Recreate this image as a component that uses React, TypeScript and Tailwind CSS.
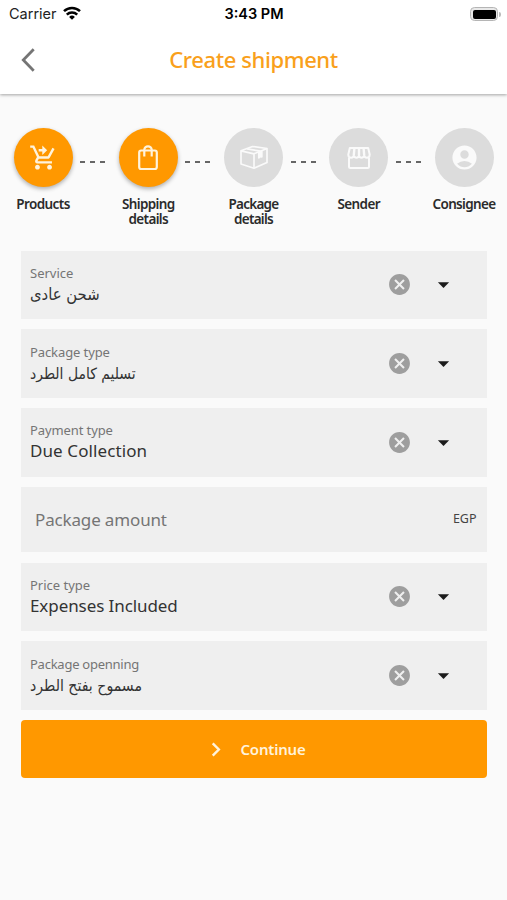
import { Fragment, type ReactNode } from 'react';
import { MdAccountCircle, MdArrowDropDown, MdCancel } from 'react-icons/md';
import clsx from 'clsx';

type Step = { label: string; labelClass: string; icon: ReactNode; active?: boolean };

type Field = {
  label: string;
  labelClass: string;
  value: string;
  valueClass: string;
  rtl?: boolean;
};

function CartIcon() {
  return (
    <svg viewBox="0 0 24 24" fill="currentColor" className="size-[29px]">
      <path d="M11 9V7H8V5h3V2l4 3.900L11 10zM7 18c-1.100 0-1.990.9-1.990 2S5.900 22 7 22s2-.9 2-2-.9-2-2-2zm10 0c-1.100 0-1.990.9-1.990 2s.89 2 1.990 2 2-.9 2-2-.9-2-2-2zm-8.900-5h7.450c.75 0 1.410-.41 1.750-1.030L21.160 4.960 19.420 4l-3.870 7H8.530L4.270 2H1v2h2l3.600 7.590-1.350 2.440C4.520 15.370 5.480 17 7 17h12v-2H7z" />
    </svg>
  );
}

function BagIcon() {
  return (
    <svg viewBox="0 0 28 28" fill="none" stroke="currentColor" strokeWidth="2.200" className="size-7">
      <rect x="5.200" y="6.500" width="17.600" height="18.500" rx="2" />
      <path d="M10.300 12.500V6a3.700 3.700 0 0 1 7.400 0v6.500" />
    </svg>
  );
}

function BoxIcon() {
  return (
    <svg viewBox="0 0 30 30" fill="none" stroke="currentColor" strokeWidth="1.700" strokeLinejoin="round" className="size-[30px]">
      <path d="M2 7.800 13.500 3.500 28 5.500v14l-13 5.700-13-4.200z" />
      <path d="M2 7.800l13 3 13-5.300M15 10.800v14.400M8 5.800l13.500 2.400" />
      <path d="M19.800 9.500v5.300l1.600-1.300 1.400.3V8z" fill="currentColor" />
    </svg>
  );
}

function StoreIcon() {
  return (
    <svg viewBox="0 0 24 24" fill="none" stroke="currentColor" strokeWidth="2" strokeLinejoin="round" className="size-6">
      <path d="M2 12v8.500a1.500 1.500 0 0 0 1.500 1.500h17a1.500 1.500 0 0 0 1.500-1.500V12" />
      <path d="M2.800 2h18.400l1.500 6.500c0 2-1.200 3.200-2.800 3.200s-2.500-1-2.700-2.200c-.4 1.300-1.400 2.200-2.700 2.200S12.200 10.700 12 9.500c-.2 1.200-1.200 2.200-2.500 2.200S7.200 10.800 6.800 9.500C6.600 10.700 5.700 11.700 4.100 11.700S1.300 10.500 1.300 8.500z" />
      <path d="M7.400 2.500 6.800 9M12 2.500V9M16.600 2.500l.6 6.500" strokeWidth="2.400" />
    </svg>
  );
}

const steps: Step[] = [
  { label: 'Products', labelClass: 'tracking-[-0.57px]', icon: <CartIcon />, active: true },
  { label: 'Shipping details', labelClass: 'tracking-[-0.65px]', icon: <BagIcon />, active: true },
  { label: 'Package details', labelClass: 'tracking-[-0.74px]', icon: <BoxIcon /> },
  { label: 'Sender', labelClass: 'tracking-[-0.6px]', icon: <StoreIcon /> },
  { label: 'Consignee', labelClass: 'tracking-[-0.65px]', icon: <MdAccountCircle className="size-[29px]" /> },
];

const fields: Field[] = [
  { label: 'Service', labelClass: 'tracking-[0px]', value: 'شحن عادى', valueClass: 'text-[16.500px]', rtl: true },
  { label: 'Package type', labelClass: 'tracking-[-0.1px]', value: 'تسليم كامل الطرد', valueClass: 'text-[15.500px]', rtl: true },
  { label: 'Payment type', labelClass: 'tracking-[-0.1px]', value: 'Due Collection', valueClass: 'tracking-[0.1px]' },
];

const moreFields: Field[] = [
  { label: 'Price type', labelClass: 'tracking-[0px]', value: 'Expenses Included', valueClass: 'tracking-[-0.08px]' },
  { label: 'Package openning', labelClass: 'tracking-[-0.25px]', value: 'مسموح بفتح الطرد', valueClass: 'text-[15.700px]', rtl: true },
];

function StatusBar() {
  return (
    <div className="grid h-7 grid-cols-3 items-center pl-[9px] pr-[6px] font-['Inter',sans-serif] text-[14.500px] text-[#222]">
      <div className="flex items-center gap-[6px]">
        <span>Carrier</span>
        <svg viewBox="0 0 18 14" className="mb-[2px] h-[14px] w-[18px] text-black">
          <path d="M1 5.200a11.500 11.500 0 0 1 16 0M3.800 8.600a7.500 7.500 0 0 1 10.400 0" fill="none" stroke="currentColor" strokeWidth="2.500" />
          <path d="M9 13.800 6.100 10.900a4.300 4.300 0 0 1 5.800 0z" fill="currentColor" />
        </svg>
      </div>
      <span className="-ml-[2px] text-center font-semibold text-black">3:43 PM</span>
      <div className="flex items-center justify-end">
        <div className="h-[14px] w-[28px] rounded-[4.500px] border border-[#b5b5b5] bg-[#e8e8e8] p-[1.500px]">
          <div className="h-full rounded-[2px] bg-black" />
        </div>
        <div className="ml-px h-[5px] w-[2px] rounded-r-full bg-[#bbb]" />
      </div>
    </div>
  );
}

function Stepper() {
  return (
    <div className="flex items-start justify-between px-[13.500px]">
      {steps.map((step, i) => (
        <Fragment key={step.label}>
          {i > 0 && (
            <div className="mt-[32.500px] mr-[6px] flex gap-[5px]">
              <span className="h-[2px] w-[5px] bg-[#666]" />
              <span className="h-[2px] w-[5px] bg-[#666]" />
              <span className="h-[2px] w-[5px] bg-[#666]" />
            </div>
          )}
          <div className="flex w-[59px] flex-col items-center">
            <div
              className={clsx(
                'flex size-[59px] items-center justify-center rounded-full',
                step.active ? 'bg-[#ff9800] text-[#fff3dc] shadow-[0_2px_4px_rgba(0,0,0,0.3)]' : 'bg-[#dcdcdc] text-[#fafafa]',
              )}
            >
              {step.icon}
            </div>
            <span
              className={clsx(
                'mt-[10px] text-center text-[13.500px] leading-[14.500px] font-semibold text-[#2b2b2b]',
                step.labelClass,
              )}
            >
              {step.label}
            </span>
          </div>
        </Fragment>
      ))}
    </div>
  );
}

function SelectField({ label, labelClass, value, valueClass, rtl }: Field) {
  return (
    <div className="flex h-[68.500px] items-center bg-[#efefef] pl-[9.500px] pr-[30px]">
      <div className="flex flex-1 flex-col items-start">
        <span className={clsx('text-[13px] leading-[18px] text-[#757575]', labelClass)}>{label}</span>
        <span
          dir={rtl ? 'rtl' : 'ltr'}
          className={clsx(
            'h-[24px] text-[#333]',
            rtl
              ? "font-['DejaVu_Sans_Condensed','DejaVu_Sans',sans-serif] leading-[26px] font-stretch-condensed"
              : 'text-[17px] leading-[24px]',
            valueClass,
          )}
        >
          {value}
        </span>
      </div>
      <MdCancel className="size-[25px] text-[#9e9e9e]" />
      <MdArrowDropDown className="ml-[18px] size-[27px] text-[#1c1c1c]" />
    </div>
  );
}

export default function App() {
  return (
    <div className="min-h-[900px] w-[507px] bg-[#fafafa] font-['Noto_Sans','DejaVu_Sans',sans-serif]">
      <header className="h-[93.500px] bg-white shadow-[0_1px_3px_rgba(0,0,0,0.35)]">
        <StatusBar />
        <div className="grid h-[63px] grid-cols-[60px_1fr_60px] items-center">
          <svg viewBox="0 0 14 24" className="ml-[21px] h-6 w-[14px]">
            <path d="M12.700 1.300 2.300 12l10.400 10.700" fill="none" stroke="#757575" strokeWidth="2.800" />
          </svg>
          <h1 className="text-center text-[22px] font-medium tracking-[-0.4px] text-[#f9a01b]">Create shipment</h1>
        </div>
      </header>

      <main className="pt-[34.500px]">
        <Stepper />
        <div className="mt-[24.500px] flex flex-col gap-[10.300px] px-[20.500px]">
          {fields.map((f) => <SelectField key={f.label} {...f} />)}
          <div className="flex h-[65.500px] items-center justify-between bg-[#efefef] pl-[14.500px] pr-[10px]">
            <span className="text-[17px] tracking-[-0.15px] text-[#757575]">Package amount</span>
            <span className="text-[12.500px] text-[#444]">EGP</span>
          </div>
          {moreFields.map((f) => <SelectField key={f.label} {...f} />)}
          <button className="flex h-[58px] items-center justify-center gap-[19px] rounded-[4px] bg-[#ff9800] pl-[10px] text-[#fff3dc]">
            <svg viewBox="0 0 10 16" className="h-[15px] w-[10px]">
              <path d="M1.500 1.500 8 8l-6.500 6.500" fill="none" stroke="currentColor" strokeWidth="2.600" />
            </svg>
            <span className="text-[15px] font-semibold tracking-[-0.2px]">Continue</span>
          </button>
        </div>
      </main>
    </div>
  );
}
